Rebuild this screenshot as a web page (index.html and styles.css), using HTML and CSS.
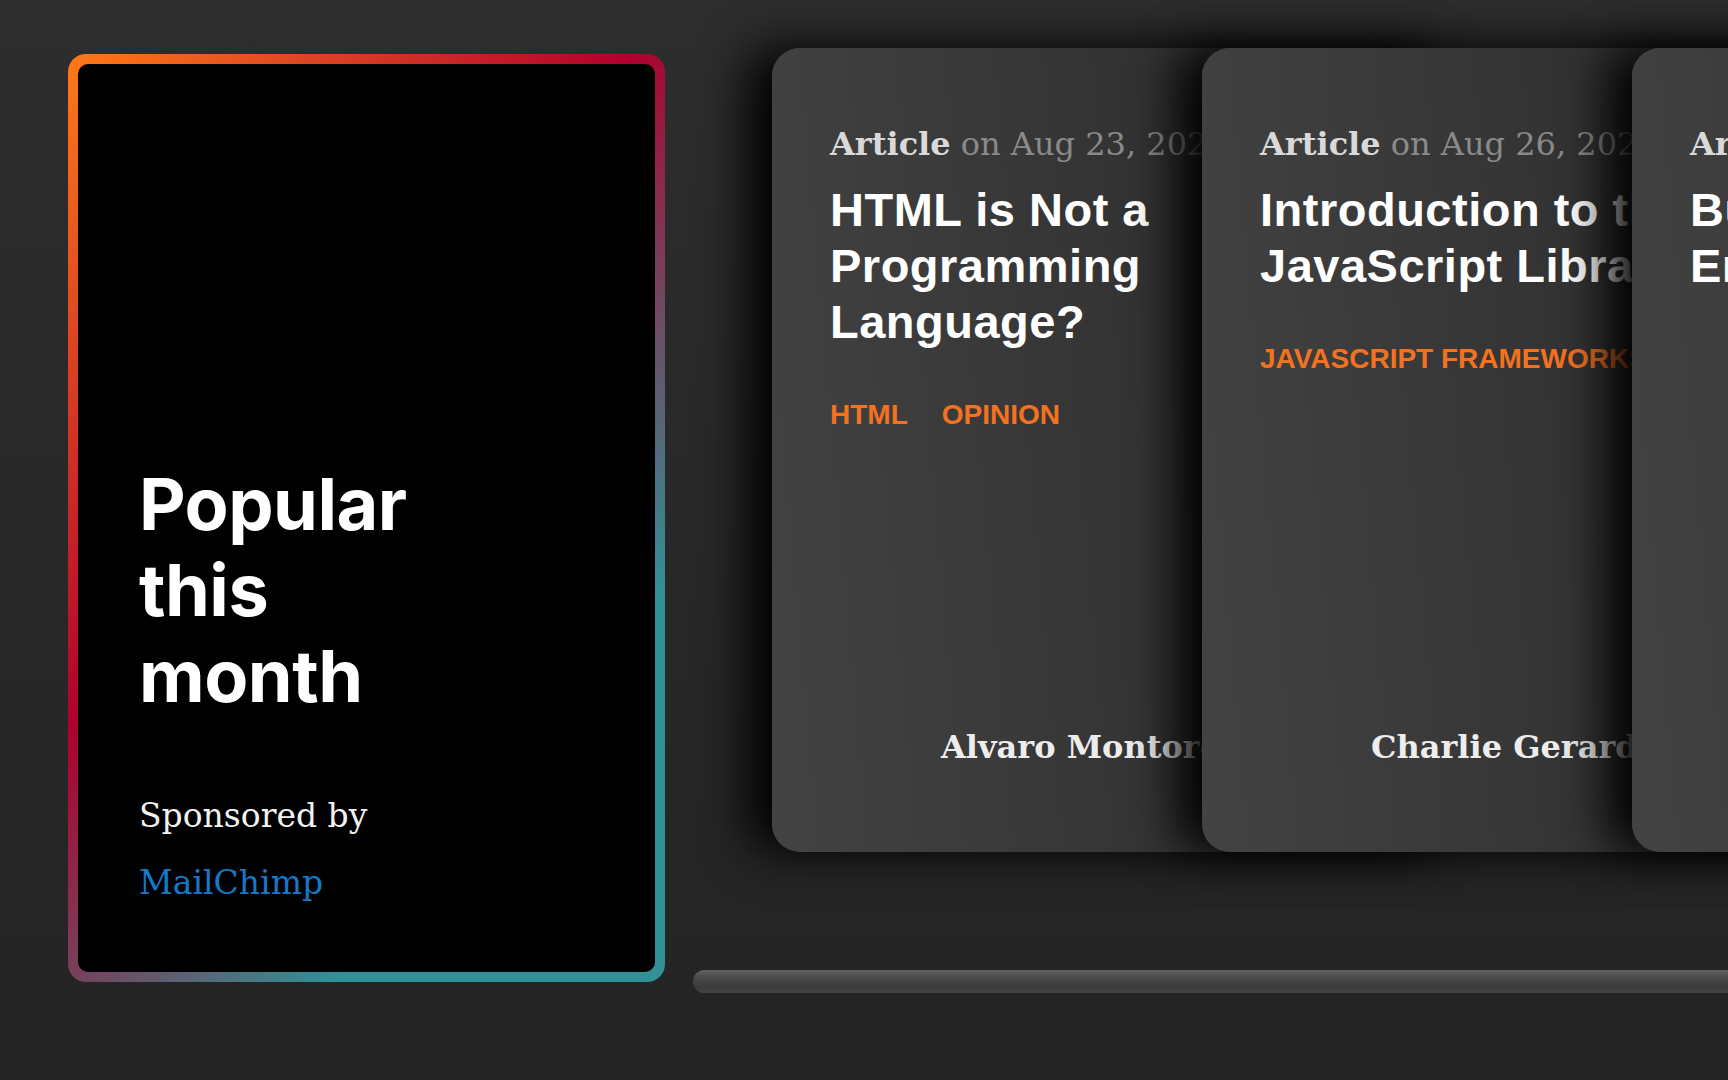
FILE: index.html
```html
<!DOCTYPE html>
<html lang="en">
<head>
<meta charset="utf-8">
<title>Popular this month</title>
<link rel="stylesheet" href="styles.css">
</head>
<body>
<section class="popular">
  <aside class="sponsor">
    <div class="sponsor-inner">
      <h2 class="sponsor-title">Popular this month</h2>
      <p class="sponsor-by">Sponsored by</p>
      <a class="sponsor-link" href="#">MailChimp</a>
    </div>
  </aside>
  <div class="carousel">
    <div class="card-list">
      <article class="mini-card">
        <div class="meta"><span class="type">Article</span> <span class="date">on Aug 23, 2021</span></div>
        <h3 class="card-title">HTML is Not a Programming Language?</h3>
        <div class="tags"><a href="#">html</a><a href="#">opinion</a></div>
        <div class="author-row"><span class="avatar"></span><span class="author-name">Alvaro Montoro</span></div>
      </article>
      <article class="mini-card">
        <div class="meta"><span class="type">Article</span> <span class="date">on Aug 26, 2021</span></div>
        <h3 class="card-title">Introduction to the Solid JavaScript Library</h3>
        <div class="tags"><a href="#">javascript frameworks</a></div>
        <div class="author-row"><span class="avatar"></span><span class="author-name">Charlie Gerard</span></div>
      </article>
      <article class="mini-card">
        <div class="meta"><span class="type">Article</span> <span class="date">on Aug 24, 2021</span></div>
        <h3 class="card-title">Building a Cool Front End Thing Generator</h3>
        <div class="author-row"><span class="avatar"></span><span class="author-name">Chris Coyier</span></div>
      </article>
    </div>
    <div class="scrollbar"><div class="thumb"></div></div>
  </div>
</section>
</body>
</html>
```

FILE: styles.css
```css
* {
  box-sizing: border-box;
}

html,
body {
  margin: 0;
  height: 100%;
  overflow: hidden;
}

body {
  background: linear-gradient(180deg, #2d2d2d 0%, #282828 50%, #242424 100%);
  color: #fff;
  font-family: "Liberation Sans", Arial, sans-serif;
}

.popular {
  display: flex;
  align-items: flex-start;
  padding-left: 68px;
  height: 1080px;
}

/* Sponsor card */
.sponsor {
  flex: none;
  width: 597px;
  height: 928px;
  margin-top: 54px;
  padding: 10px;
  border-radius: 18px;
  background: linear-gradient(130deg, #ff7a18, #af002d 41.07%, #319197 76.05%);
}

.sponsor-inner {
  height: 100%;
  display: flex;
  flex-direction: column;
  justify-content: flex-end;
  align-items: flex-start;
  padding: 0 61px 65px;
  background: #000;
  border-radius: 10px;
}

.sponsor-title {
  margin: 0;
  max-width: 320px;
  font-family: Inter, "Liberation Sans", sans-serif;
  font-weight: 700;
  font-size: 72px;
  line-height: 86px;
  letter-spacing: -0.5px;
  color: #fff;
}

.sponsor-by {
  margin: 72px 0 0;
  font-family: "DejaVu Serif", "Liberation Serif", serif;
  font-size: 33px;
  line-height: 49.5px;
  color: #f2f2f2;
}

.sponsor-link {
  margin-top: 17px;
  font-family: "DejaVu Serif", "Liberation Serif", serif;
  font-size: 33px;
  line-height: 49.5px;
  color: #1479c9;
  text-decoration: none;
}

/* Carousel */
.carousel {
  flex: none;
  width: 1500px;
  margin-left: 28px;
  padding-top: 48px;
}

.card-list {
  display: flex;
  padding-left: 79px;
}

.mini-card {
  flex: none;
  position: relative;
  display: flex;
  flex-direction: column;
  width: 684px;
  height: 804px;
  padding: 73px 58px 58px;
  border-radius: 28px;
  background: linear-gradient(85deg, #434343, #262626);
  box-shadow: -24px 0 48px #000;
}

.mini-card + .mini-card {
  margin-left: -254px;
}

.meta {
  font-family: "DejaVu Serif", "Liberation Serif", serif;
  font-size: 32px;
  line-height: 46px;
  white-space: nowrap;
}

.type {
  font-weight: 700;
  color: #d9d9d9;
}

.date {
  color: #8a8a8a;
}

.card-title {
  margin: 15px 0 0;
  font-family: "Liberation Sans", Arial, sans-serif;
  font-weight: 700;
  font-size: 47px;
  line-height: 56px;
  letter-spacing: 0.5px;
  color: #fff;
}

.tags {
  display: flex;
  gap: 34px;
  margin-top: 49px;
  font-family: "Liberation Sans", Arial, sans-serif;
  font-weight: 700;
  font-size: 28px;
  line-height: 32px;
  text-transform: uppercase;
  white-space: nowrap;
}

.tags a {
  color: #f4721f;
  text-decoration: none;
}

.author-row {
  margin-top: auto;
  margin-bottom: 7px;
  display: flex;
  align-items: center;
  gap: 15px;
  height: 80px;
}

.avatar {
  flex: none;
  width: 96px;
  height: 80px;
}

.author-name {
  font-family: "DejaVu Serif", "Liberation Serif", serif;
  font-weight: 700;
  font-size: 32px;
  line-height: 45px;
  color: #ededed;
  white-space: nowrap;
}

/* Scrollbar */
.scrollbar {
  margin-top: 118px;
  height: 23px;
}

.thumb {
  width: 1400px;
  height: 23px;
  border-radius: 12px;
  background: linear-gradient(180deg, #626262 0%, #484848 35%, #3b3b3b 75%, #444 100%);
}
```
